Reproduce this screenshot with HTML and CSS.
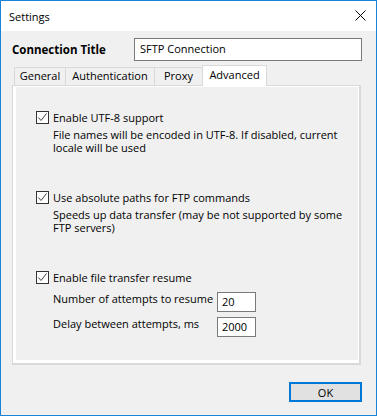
FILE: index.html
```html
<!DOCTYPE html>
<html lang="en">

<head>
    <meta charset="UTF-8">
    <meta name="viewport" content="width=device-width, initial-scale=1.0">
    <title>Settings</title>
    <link rel="stylesheet" href="styles.css">
</head>

<body>
    <div class="window">
        <div class="titlebar">
            <span class="title">Settings</span>
            <svg class="close-icon" width="11" height="11" viewBox="0 0 11 11">
                <path d="M0.5 0.5 L10.5 10.5 M10.5 0.5 L0.5 10.5" stroke="#000" stroke-width="1" fill="none" />
            </svg>
        </div>

        <div class="dialog">
            <div class="conn-row">
                <div class="conn-label">Connection Title</div>
                <div class="textbox conn-input">SFTP Connection</div>
            </div>

            <div class="tabs">
                <div class="tab tab-general">General</div>
                <div class="tab tab-auth">Authentication</div>
                <div class="tab tab-proxy">Proxy</div>
                <div class="tab tab-advanced active">Advanced</div>
            </div>

            <div class="tab-panel">
                <div class="tab-page">
                    <!-- UTF-8 -->
                    <div class="option">
                        <div class="check-row">
                            <span class="checkbox">
                                <svg width="11" height="11" viewBox="0 0 11 11">
                                    <path d="M1.5 5.5 L4 8.5 L9.5 1.5" stroke="#444" stroke-width="1" fill="none" />
                                </svg>
                            </span>
                            <span>Enable UTF-8 support</span>
                        </div>
                        <div class="option-desc">
                            <div class="desc-line">File names will be encoded in UTF-8. If disabled, current</div>
                            <div class="desc-line">locale will be used</div>
                        </div>
                    </div>

                    <!-- Absolute paths -->
                    <div class="option">
                        <div class="check-row">
                            <span class="checkbox">
                                <svg width="11" height="11" viewBox="0 0 11 11">
                                    <path d="M1.5 5.5 L4 8.5 L9.5 1.5" stroke="#444" stroke-width="1" fill="none" />
                                </svg>
                            </span>
                            <span>Use absolute paths for FTP commands</span>
                        </div>
                        <div class="option-desc">
                            <div class="desc-line">Speeds up data transfer (may be not supported by some</div>
                            <div class="desc-line">FTP servers)</div>
                        </div>
                    </div>

                    <!-- Resume -->
                    <div class="option">
                        <div class="check-row">
                            <span class="checkbox">
                                <svg width="11" height="11" viewBox="0 0 11 11">
                                    <path d="M1.5 5.5 L4 8.5 L9.5 1.5" stroke="#444" stroke-width="1" fill="none" />
                                </svg>
                            </span>
                            <span>Enable file transfer resume</span>
                        </div>
                        <div class="fields">
                            <div class="field-row">
                                <span class="field-label">Number of attempts to resume</span>
                                <div class="textbox field-input">20</div>
                            </div>
                            <div class="field-row">
                                <span class="field-label">Delay between attempts, ms</span>
                                <div class="textbox field-input">2000</div>
                            </div>
                        </div>
                    </div>
                </div>
            </div>

            <div class="footer">
                <button class="btn-ok">OK</button>
            </div>
        </div>
    </div>
</body>

</html>
```

FILE: styles.css
```css
* {
    margin: 0;
    padding: 0;
    box-sizing: border-box;
}

body {
    font-family: 'Open Sans', 'Liberation Sans', sans-serif;
    font-size: 11px;
    color: #000;
    background: #f0f0f0;
}

.window {
    width: 377px;
    height: 416px;
    border: 1px solid #1883d7;
    background: #f0f0f0;
    display: flex;
    flex-direction: column;
}

.titlebar {
    height: 30px;
    background: white;
    display: flex;
    align-items: center;
    justify-content: space-between;
    padding: 0 10px 0 8px;
}

.close-icon {
    display: block;
    margin-top: -1px;
}

.dialog {
    flex: 1;
    padding: 7px 0 0 11px;
}

.conn-row {
    display: flex;
    align-items: center;
}

.conn-label {
    width: 122px;
    font-weight: bold;
    font-size: 11.5px;
}

.textbox {
    background: white;
    border: 1px solid #7a7a7a;
}

.conn-input {
    width: 228px;
    height: 23px;
    line-height: 20px;
    padding-left: 5px;
}

.tabs {
    display: flex;
    align-items: flex-end;
    height: 20px;
    margin: 4px 0 0 2px;
    position: relative;
    z-index: 1;
}

.tab {
    height: 18px;
    line-height: 16px;
    border: 1px solid #d9d9d9;
    border-bottom: none;
    background: #f0f0f0;
    text-align: center;
    margin-right: -1px;
}

.tab.active {
    height: 21px;
    line-height: 18px;
    background: white;
    margin-bottom: -1px;
}

.tab-general {
    width: 52px;
}

.tab-auth {
    width: 90px;
}

.tab-proxy {
    width: 49px;
}

.tab-advanced {
    width: 65px;
}

.tab-panel {
    width: 349px;
    height: 280px;
    border-style: solid;
    border-color: #d9d9d9;
    border-width: 1px 2px 2px 1px;
    background: white;
    padding: 1px 1px 3px 3px;
}

.tab-page {
    height: 100%;
    background: #f0f0f0;
    padding: 23px 0 0 20px;
}

.option + .option {
    margin-top: 36px;
}

.check-row {
    display: flex;
    align-items: center;
    height: 15px;
    gap: 4px;
}

.checkbox {
    width: 13px;
    height: 13px;
    border: 1px solid #333;
    background: white;
    display: flex;
    align-items: center;
    justify-content: center;
}

.checkbox svg {
    display: block;
}

.option-desc {
    margin: 3px 0 0 17px;
}

.desc-line {
    height: 13px;
    line-height: 13px;
}

.fields {
    margin: 7px 0 0 17px;
    display: flex;
    flex-direction: column;
    gap: 5px;
}

.field-row {
    display: flex;
    align-items: flex-start;
}

.field-label {
    width: 164px;
    line-height: 14px;
}

.field-input {
    width: 39px;
    height: 20px;
    line-height: 18px;
    padding-left: 4px;
}

.footer {
    display: flex;
    justify-content: flex-end;
    padding-right: 14px;
    margin-top: 17px;
}

.btn-ok {
    width: 73px;
    height: 20px;
    border: 2px solid #0078d7;
    background: #e1e1e1;
    font-family: inherit;
    font-size: 11px;
    color: #000;
}
```
